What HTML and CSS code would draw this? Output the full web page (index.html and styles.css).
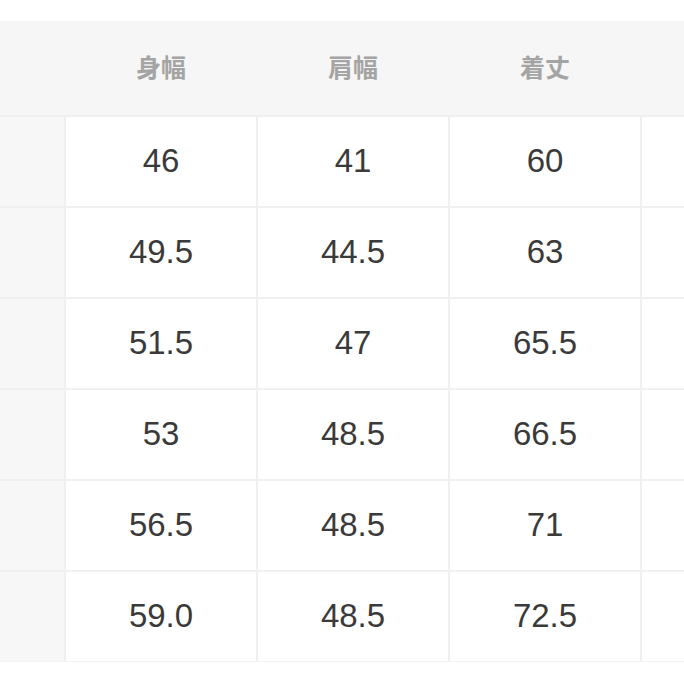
FILE: index.html
```html
<!DOCTYPE html>
<html lang="ja">
<head>
<meta charset="utf-8">
<link rel="stylesheet" href="styles.css">
</head>
<body>
<div class="table">
  <div class="head">
    <div class="hcell"></div>
    <div class="hcell">身幅</div>
    <div class="hcell">肩幅</div>
    <div class="hcell">着丈</div>
    <div class="hcell"></div>
  </div>
  <div class="grid">
    <div class="side"></div><div class="cell">46</div><div class="cell">41</div><div class="cell">60</div><div class="cell"></div>
    <div class="side"></div><div class="cell">49.5</div><div class="cell">44.5</div><div class="cell">63</div><div class="cell"></div>
    <div class="side"></div><div class="cell">51.5</div><div class="cell">47</div><div class="cell">65.5</div><div class="cell"></div>
    <div class="side"></div><div class="cell">53</div><div class="cell">48.5</div><div class="cell">66.5</div><div class="cell"></div>
    <div class="side"></div><div class="cell">56.5</div><div class="cell">48.5</div><div class="cell">71</div><div class="cell"></div>
    <div class="side"></div><div class="cell">59.0</div><div class="cell">48.5</div><div class="cell">72.5</div><div class="cell"></div>
  </div>
</div>
</body>
</html>
```
FILE: styles.css
```css
html, body {
  margin: 0;
  padding: 0;
  background: #ffffff;
}
body {
  width: 684px;
  height: 684px;
  overflow: hidden;
  font-family: "Liberation Sans", "Noto Sans CJK JP", sans-serif;
}
.table {
  margin-top: 21px;
  background: #f0f0f0;
  border-bottom: 1px solid #f3f3f3;
}
.head {
  display: grid;
  grid-template-columns: 64px 190px 190px 190px 1fr;
  column-gap: 2px;
  height: 94px;
  background: #f6f6f6;
}
.hcell {
  display: flex;
  align-items: center;
  justify-content: center;
  padding-bottom: 4px;
  font-family: "Noto Sans CJK JP", sans-serif;
  font-weight: 700;
  font-size: 25px;
  color: #a4a4a4;
}
.grid {
  display: grid;
  grid-template-columns: 64px 190px 190px 190px 1fr;
  grid-auto-rows: 89px;
  gap: 2px;
  margin-top: 2px;
}
.side {
  background: #f7f7f7;
}
.cell {
  background: #ffffff;
  display: flex;
  align-items: center;
  justify-content: center;
  padding-bottom: 2px;
  font-family: "Liberation Sans", sans-serif;
  font-size: 33px;
  color: #3a3a3a;
}
```
